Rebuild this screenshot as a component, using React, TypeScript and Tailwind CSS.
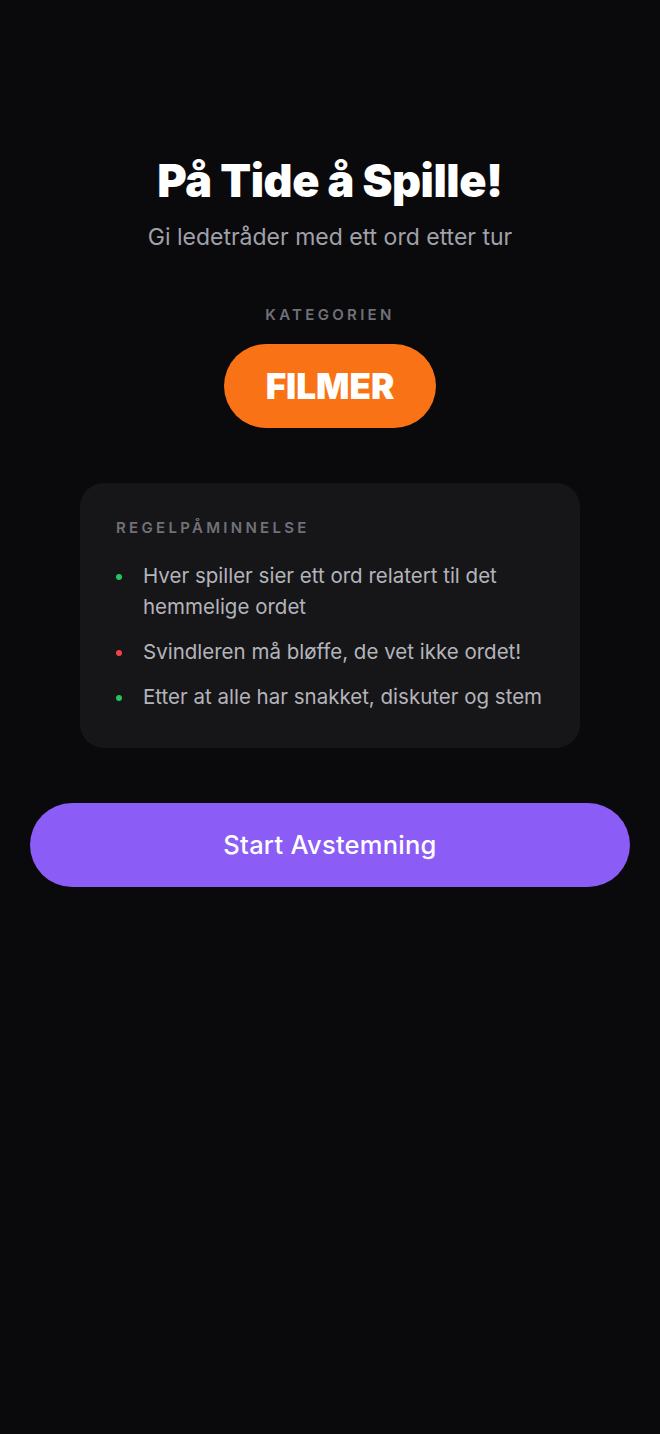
export default function App() {
  const rules = [
    { c: "bg-[#22c55e]", t: "Hver spiller sier ett ord relatert til det hemmelige ordet" },
    { c: "bg-[#ef4444]", t: "Svindleren må bløffe, de vet ikke ordet!" },
    { c: "bg-[#22c55e]", t: "Etter at alle har snakket, diskuter og stem" },
  ];
  return (
    <div className="min-h-[1434px] w-full bg-[#0a0a0c] px-[30px] pt-[153px] font-['Inter',sans-serif] text-white">
      <div className="flex flex-col items-center">
        <h1 className="text-[45px] font-black leading-[56px] tracking-[-0.01em]">På Tide å Spille!</h1>
        <p className="mt-[12px] text-[23px] leading-[32px] text-[#a1a1aa]">Gi ledetråder med ett ord etter tur</p>
        <div className="mt-[52px] text-[15px] font-semibold uppercase leading-[20px] tracking-[0.22em] text-[#71717a]">Kategorien</div>
        <div className="mt-[19px] flex h-[84px] w-[212px] items-center justify-center rounded-full bg-[#f97316]">
          <span className="text-[35px] font-black leading-none">FILMER</span>
        </div>
        <div className="mt-[55px] w-[500px] rounded-[24px] bg-[#161618] px-[36px] pb-[36px] pt-[35px]">
          <div className="text-[15px] font-semibold uppercase leading-[20px] tracking-[0.22em] text-[#71717a]">Regelpåminnelse</div>
          <ul className="mt-[22px] flex flex-col gap-[14px]">
            {rules.map((r, i) => (
              <li key={i} className="flex items-start gap-[21px]">
                <span className={`mt-[14px] h-[6px] w-[6px] shrink-0 rounded-full ${r.c}`} />
                <span className="text-[20.5px] leading-[31px] text-[#b4b4bb]">{r.t}</span>
              </li>
            ))}
          </ul>
        </div>
        <button className="mt-[55px] flex h-[84px] w-full items-center justify-center rounded-full bg-[#8b5cf6] text-[25.5px] font-medium tracking-[0.01em] text-white">
          Start Avstemning
        </button>
      </div>
    </div>
  );
}
